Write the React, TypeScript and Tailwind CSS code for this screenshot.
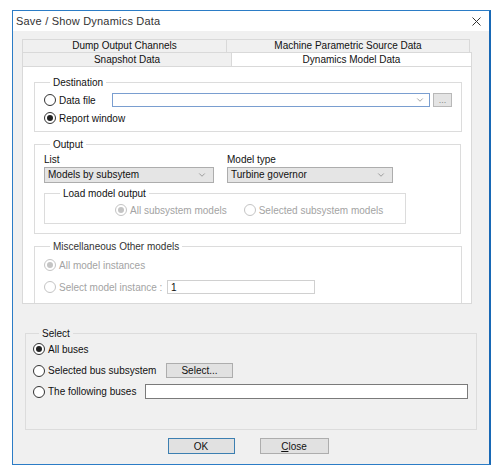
import { ChevronDown } from 'lucide-react'

function Radio({ checked = false, disabled = false }: { checked?: boolean; disabled?: boolean }) {
  const ring = disabled ? 'border-[#c4c4c4]' : 'border-[#333333]'
  const dot = disabled ? 'bg-[#c4c4c4]' : 'bg-[#222222]'
  return (
    <span className={`flex size-[12px] shrink-0 items-center justify-center rounded-full border bg-white ${ring}`}>
      {checked && <span className={`size-[6px] rounded-full ${dot}`} />}
    </span>
  )
}

function Group({ label, className, legendClass, children }: { label: string; className: string; legendClass?: string; children: React.ReactNode }) {
  return (
    <fieldset className={`border border-[#dcdcdc] ${className}`}>
      <legend className={`ml-[6px] px-[3px] text-[10px] leading-[13px] ${legendClass ?? 'text-[#111]'}`}>{label}</legend>
      {children}
    </fieldset>
  )
}

function Combo({ text, className }: { text: string; className: string }) {
  return (
    <div className={`flex h-[16px] items-center justify-between border border-[#adadad] bg-[#e5e5e5] pl-[3px] pr-[6px] ${className}`}>
      <span className="text-[10px] leading-none">{text}</span>
      <ChevronDown className="size-[10px] text-[#707070]" strokeWidth={1.5} />
    </div>
  )
}

export default function App() {
  return (
    <div className="h-[471px] w-[501px] bg-white pl-[12px] pt-[10px] font-['Liberation_Sans',Arial,sans-serif] text-[#111]">
      <div className="flex h-[455px] w-[479px] flex-col border border-[#2b7cc6] border-r-2 border-r-[#1868b5]">
        <div className="flex h-[20px] shrink-0 items-center justify-between bg-white pl-[3px] pr-[8px]">
          <span className="text-[11px] tracking-[0.2px] text-[#333]">Save / Show Dynamics Data</span>
          <svg width="9" height="9" viewBox="0 0 9 9" className="text-[#333]">
            <path d="M0.5 0.5 L8.5 8.5 M8.5 0.5 L0.5 8.5" stroke="currentColor" strokeWidth="1" />
          </svg>
        </div>

        <div className="flex flex-1 flex-col bg-[#f0f0f0] pt-[8px]">
          <div className="pl-[9px]">
            <div className="flex text-[10px] leading-[12px]">
              <div className="w-[204px] border-t border-l border-[#d9d9d9] bg-[#f0f0f0] text-center">Dump Output Channels</div>
              <div className="w-[244px] border-t border-x border-[#d9d9d9] bg-[#f0f0f0] text-center">Machine Parametric Source Data</div>
            </div>
            <div className="flex text-[10px] leading-[13px]">
              <div className="w-[209px] border-t border-l border-[#d9d9d9] bg-[#f0f0f0] text-center">Snapshot Data</div>
              <div className="relative z-10 -mb-px h-[14px] w-[241px] border-t border-x border-[#d9d9d9] bg-white text-center">Dynamics Model Data</div>
            </div>

            <div className="h-[238px] w-[450px] overflow-hidden border border-[#d9d9d9] bg-white px-[11px] pt-[9px]">
              <Group label="Destination" className="w-[428px] px-[9px] pb-[6px]">
                <div className="mt-[4px] flex h-[14px] items-center">
                  <Radio />
                  <span className="ml-[3px] w-[53px] text-[10px]">Data file</span>
                  <div className="flex h-[14px] w-[318px] items-center justify-end border border-[#7a9ed0] bg-white pr-[4px]">
                    <ChevronDown className="size-[10px] text-[#707070]" strokeWidth={1.5} />
                  </div>
                  <div className="ml-[3px] flex h-[14px] w-[19px] items-center justify-center border border-[#b8b8b8] bg-[#e4e4e4] text-[9px] leading-none text-[#888]">...</div>
                </div>
                <div className="mt-[4px] flex h-[14px] items-center">
                  <Radio checked />
                  <span className="ml-[3px] text-[10px]">Report window</span>
                </div>
              </Group>

              <Group label="Output" className="mt-[6px] w-[427px] px-[9px] pb-[9px]">
                <div className="mt-[2px] flex gap-[13px]">
                  <div>
                    <div className="text-[10px] leading-[13px]">List</div>
                    <Combo text="Models by subsytem" className="mt-[1px] w-[170px]" />
                  </div>
                  <div>
                    <div className="text-[10px] leading-[13px]">Model type</div>
                    <Combo text="Turbine governor" className="mt-[1px] w-[166px]" />
                  </div>
                </div>
                <Group label="Load model output" className="mt-[4px] w-[362px] px-[9px] pb-[6px]">
                  <div className="mt-[3px] flex h-[14px] items-center pl-[61px] text-[10px] text-[#a3a3a3]">
                    <Radio checked disabled />
                    <span className="ml-[3px]">All subsystem models</span>
                    <span className="ml-[17px]"><Radio disabled /></span>
                    <span className="ml-[3px]">Selected subsystem models</span>
                  </div>
                </Group>
              </Group>

              <Group label="Miscellaneous Other models" className="mt-[6px] h-[80px] w-[428px] px-[9px]" legendClass="text-[#333]">
                <div className="mt-[5px] flex h-[14px] items-center text-[10px] text-[#a3a3a3]">
                  <Radio checked disabled />
                  <span className="ml-[3px]">All model instances</span>
                </div>
                <div className="mt-[8px] flex h-[14px] items-center text-[10px] text-[#a3a3a3]">
                  <Radio disabled />
                  <span className="ml-[3px] w-[108px]">Select model instance :</span>
                  <div className="flex h-[14px] w-[148px] items-center border border-[#d0d0d0] bg-white pl-[3px] text-[#111]">1</div>
                </div>
              </Group>
            </div>
          </div>

          <Group label="Select" className="ml-[12px] mt-[23px] w-[452px] pb-[30px] pl-[7px]">
            <div className="mt-[2px] flex h-[14px] items-center text-[10px]">
              <Radio checked />
              <span className="ml-[3px]">All buses</span>
            </div>
            <div className="mt-[7px] flex h-[15px] items-center text-[10px]">
              <Radio />
              <span className="ml-[3px] w-[118px]">Selected bus subsystem</span>
              <div className="flex h-[15px] w-[67px] items-center justify-center border border-[#adadad] bg-[#e1e1e1] text-[10px]">Select...</div>
            </div>
            <div className="mt-[6px] flex h-[15px] items-center text-[10px]">
              <Radio />
              <span className="ml-[3px] w-[97px]">The following buses</span>
              <div className="h-[15px] w-[323px] border border-[#7a7a7a] bg-white" />
            </div>
          </Group>

          <div className="mt-[8px] flex justify-center gap-[25px] pr-[6px]">
            <button type="button" className="flex h-[16px] w-[67px] items-center justify-center border border-[#3c7fb1] bg-[#e1e1e1] text-[10px]">OK</button>
            <button type="button" className="flex h-[16px] w-[69px] items-center justify-center border border-[#adadad] bg-[#e1e1e1] text-[10px]">
              <span className="underline">C</span>lose
            </button>
          </div>
        </div>
      </div>
    </div>
  )
}
